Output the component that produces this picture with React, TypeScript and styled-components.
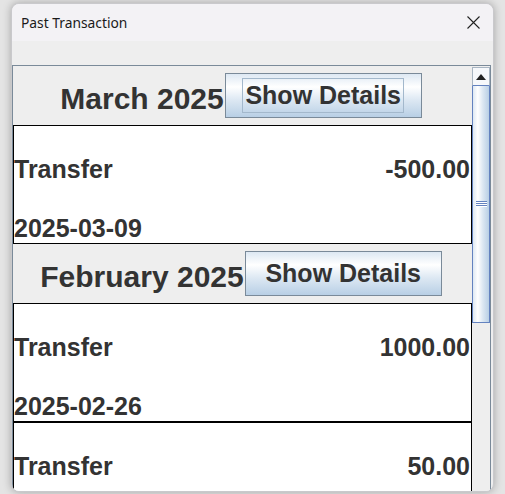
import React from "react";
import styled, { createGlobalStyle } from "styled-components";

const Global = createGlobalStyle`
  html, body { margin: 0; padding: 0; }
  body {
    width: 505px;
    height: 494px;
    overflow: hidden;
    background: #e4e4e4;
  }
`;

const Desktop = styled.div`
  width: 505px;
  height: 494px;
  padding: 3px 0 0 11px;
  box-sizing: border-box;
`;

const Window = styled.div`
  width: 483px;
  height: 489px;
  box-sizing: border-box;
  border: 1px solid #c9c9cc;
  border-radius: 8px;
  overflow: hidden;
  background: #eeeeee;
  box-shadow: 0 0 9px rgba(0, 0, 0, 0.28);
  display: flex;
  flex-direction: column;
`;

const TitleBar = styled.div`
  height: 37px;
  flex: none;
  background: #f3f2f5;
  display: flex;
  align-items: center;
  justify-content: space-between;
  padding: 0 13px 0 9px;
  font-family: "Noto Sans", "Open Sans", sans-serif;
  font-size: 13.8px;
  color: #1a1a1a;
`;

const CloseIcon = () => (
  <svg width="13" height="13" viewBox="0 0 13 13">
    <path d="M0.5 0.5 L12.5 12.5 M12.5 0.5 L0.5 12.5" stroke="#222" strokeWidth="1.1" fill="none" />
  </svg>
);

const Content = styled.div`
  flex: 1;
  padding: 24px 0 0 0;
  min-height: 0;
  display: flex;
`;

const ScrollPane = styled.div`
  width: 479px;
  box-sizing: border-box;
  border: 1px solid #7a8a99;
  border-bottom: none;
  display: flex;
  min-height: 0;
  overflow: hidden;
`;

const Viewport = styled.div`
  width: 459px;
  flex: none;
  display: flex;
  flex-direction: column;
  font-family: "Liberation Sans", Arial, sans-serif;
  font-weight: bold;
  color: #333333;
`;

const MonthHeader = styled.div`
  height: 59px;
  flex: none;
  display: flex;
  align-items: center;
  justify-content: center;
  gap: 1px;
  padding-right: 3px;
`;

const MonthLabel = styled.span`
  font-size: 30px;
  padding-top: 7px;
  white-space: nowrap;
`;

const DetailsButton = styled.div`
  width: 197px;
  height: 45px;
  box-sizing: border-box;
  border: 1px solid #7a8a99;
  background: linear-gradient(
    to bottom,
    #dde8f3 0%,
    #ffffff 30%,
    #dde8f3 60%,
    #b8cfe5 100%
  );
  display: flex;
  align-items: center;
  justify-content: center;
  font-size: 25px;
  color: #333333;
`;

const ButtonText = styled.span<{ $focused?: boolean }>`
  padding: 2px 2px 3px;
  border: 1px solid ${(p) => (p.$focused ? "#a3b8cc" : "transparent")};
  line-height: 28px;
`;

const Card = styled.div`
  height: 119px;
  flex: none;
  box-sizing: border-box;
  border: 1px solid #000;
  background: #ffffff;
  display: grid;
  grid-template-rows: 30px 30px;
  row-gap: 29px;
  padding: 28px 1px 0 0;
  font-size: 25px;
  line-height: 30px;
`;

const Row = styled.div`
  display: flex;
  justify-content: space-between;
  white-space: nowrap;
`;

const ScrollBar = styled.div`
  width: 18px;
  flex: none;
  display: flex;
  flex-direction: column;
  background: #eeeeee;
  padding-top: 1px;
`;

const ArrowButton = styled.div`
  height: 19px;
  flex: none;
  box-sizing: border-box;
  border: 1px solid #a8b5c2;
  border-bottom: 1px solid #6382bf;
  background: #f6f8fb;
  display: flex;
  align-items: center;
  justify-content: center;
`;

const Thumb = styled.div`
  height: 237px;
  flex: none;
  box-sizing: border-box;
  border: 1px solid #6382bf;
  border-top: none;
  background: linear-gradient(to right, #dde8f3 0%, #ffffff 30%, #dde8f3 60%, #b8cfe5 100%);
  display: flex;
  align-items: center;
  justify-content: center;
`;

const Grip = styled.div`
  width: 11px;
  height: 6px;
  background: repeating-linear-gradient(
    to bottom,
    #6382bf 0px,
    #6382bf 1px,
    #ffffff 1px,
    #ffffff 2px
  );
`;

type Tx = { type: string; amount: string; date: string };
type Month = { label: string; focused?: boolean; items: Tx[] };

const months: Month[] = [
  {
    label: "March 2025",
    focused: true,
    items: [{ type: "Transfer", amount: "-500.00", date: "2025-03-09" }],
  },
  {
    label: "February 2025",
    items: [
      { type: "Transfer", amount: "1000.00", date: "2025-02-26" },
      { type: "Transfer", amount: "50.00", date: "2025-02-20" },
    ],
  },
];

export default function App() {
  return (
    <>
      <Global />
      <Desktop>
        <Window>
          <TitleBar>
            <span>Past Transaction</span>
            <CloseIcon />
          </TitleBar>
          <Content>
            <ScrollPane>
              <Viewport>
                {months.map((m) => (
                  <React.Fragment key={m.label}>
                    <MonthHeader>
                      <MonthLabel>{m.label}</MonthLabel>
                      <DetailsButton>
                        <ButtonText $focused={m.focused}>Show Details</ButtonText>
                      </DetailsButton>
                    </MonthHeader>
                    {m.items.map((t, i) => (
                      <Card key={i}>
                        <Row>
                          <span>{t.type}</span>
                          <span>{t.amount}</span>
                        </Row>
                        <Row>
                          <span>{t.date}</span>
                        </Row>
                      </Card>
                    ))}
                  </React.Fragment>
                ))}
              </Viewport>
              <ScrollBar>
                <ArrowButton>
                  <svg width="10" height="6" viewBox="0 0 10 6">
                    <path d="M0 6 L5 0 L10 6 Z" fill="#222" />
                  </svg>
                </ArrowButton>
                <Thumb>
                  <Grip />
                </Thumb>
              </ScrollBar>
            </ScrollPane>
          </Content>
        </Window>
      </Desktop>
    </>
  );
}
